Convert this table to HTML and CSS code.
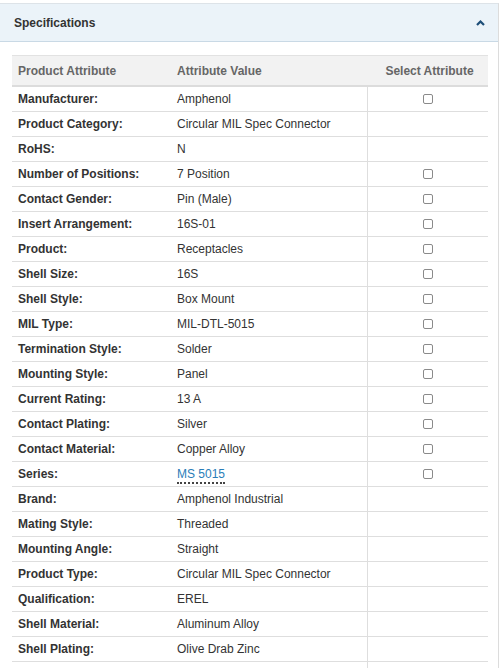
FILE: index.html
```html
<!DOCTYPE html>
<html>
<head>
<meta charset="utf-8">
<link rel="stylesheet" href="styles.css">
</head>
<body>
<div class="panel">
  <div class="panel-head">
    <span class="panel-title">Specifications</span>
    <svg class="chev" width="9" height="6" viewBox="0 0 9 6"><polyline points="1,5 4.5,1.5 8,5" fill="none" stroke="#1d4e78" stroke-width="2.2"/></svg>
  </div>
  <div class="panel-body">
    <table class="spec">
      <thead>
        <tr><th class="c1">Product Attribute</th><th class="c2">Attribute Value</th><th class="c3">Select Attribute</th></tr>
      </thead>
      <tbody>
        <tr><td class="lbl">Manufacturer:</td><td>Amphenol</td><td class="sel"><span class="cb"></span></td></tr>
        <tr><td class="lbl">Product Category:</td><td>Circular MIL Spec Connector</td><td class="sel"></td></tr>
        <tr><td class="lbl">RoHS:</td><td>N</td><td class="sel"></td></tr>
        <tr><td class="lbl">Number of Positions:</td><td>7 Position</td><td class="sel"><span class="cb"></span></td></tr>
        <tr><td class="lbl">Contact Gender:</td><td>Pin (Male)</td><td class="sel"><span class="cb"></span></td></tr>
        <tr><td class="lbl">Insert Arrangement:</td><td>16S-01</td><td class="sel"><span class="cb"></span></td></tr>
        <tr><td class="lbl">Product:</td><td>Receptacles</td><td class="sel"><span class="cb"></span></td></tr>
        <tr><td class="lbl">Shell Size:</td><td>16S</td><td class="sel"><span class="cb"></span></td></tr>
        <tr><td class="lbl">Shell Style:</td><td>Box Mount</td><td class="sel"><span class="cb"></span></td></tr>
        <tr><td class="lbl">MIL Type:</td><td>MIL-DTL-5015</td><td class="sel"><span class="cb"></span></td></tr>
        <tr><td class="lbl">Termination Style:</td><td>Solder</td><td class="sel"><span class="cb"></span></td></tr>
        <tr><td class="lbl">Mounting Style:</td><td>Panel</td><td class="sel"><span class="cb"></span></td></tr>
        <tr><td class="lbl">Current Rating:</td><td>13 A</td><td class="sel"><span class="cb"></span></td></tr>
        <tr><td class="lbl">Contact Plating:</td><td>Silver</td><td class="sel"><span class="cb"></span></td></tr>
        <tr><td class="lbl">Contact Material:</td><td>Copper Alloy</td><td class="sel"><span class="cb"></span></td></tr>
        <tr><td class="lbl">Series:</td><td><a class="lnk" href="#">MS 5015</a></td><td class="sel"><span class="cb"></span></td></tr>
        <tr><td class="lbl">Brand:</td><td>Amphenol Industrial</td><td class="sel"></td></tr>
        <tr><td class="lbl">Mating Style:</td><td>Threaded</td><td class="sel"></td></tr>
        <tr><td class="lbl">Mounting Angle:</td><td>Straight</td><td class="sel"></td></tr>
        <tr><td class="lbl">Product Type:</td><td>Circular MIL Spec Connector</td><td class="sel"></td></tr>
        <tr><td class="lbl">Qualification:</td><td>EREL</td><td class="sel"></td></tr>
        <tr><td class="lbl">Shell Material:</td><td>Aluminum Alloy</td><td class="sel"></td></tr>
        <tr><td class="lbl">Shell Plating:</td><td>Olive Drab Zinc</td><td class="sel"></td></tr>
        <tr><td class="lbl">&nbsp;</td><td>&nbsp;</td><td class="sel"></td></tr>
      </tbody>
    </table>
  </div>
</div>
</body>
</html>
```

FILE: styles.css
```css
html, body {
  margin: 0;
  padding: 0;
  background: #fff;
}
body {
  padding-top: 3px;
  font-family: "Liberation Sans", Arial, sans-serif;
  font-size: 12px;
  color: #333;
}
.panel {
  width: 498px;
  border-top: 1px solid #dde3e8;
  border-right: 1px solid #dcdcdc;
}
.panel-head {
  height: 37px;
  background: #ebf3f9;
  border-bottom: 1px solid #c9d9e5;
  display: flex;
  align-items: center;
  justify-content: space-between;
  padding: 0 13px 0 14px;
}
.panel-title {
  font-weight: bold;
  color: #333;
  font-size: 12px;
}
.chev {
  display: block;
}
.panel-body {
  padding: 13px 10px 0 12px;
}
.spec {
  width: 476px;
  border-collapse: collapse;
  table-layout: fixed;
}
.spec th {
  background: #f2f2f2;
  color: #666;
  font-weight: bold;
  text-align: left;
  padding: 8px 6px 6px 6px;
  line-height: 15px;
  border-top: 1px solid #e2e2e2;
  border-bottom: 2px solid #dcdcdc;
  font-size: 12px;
}
.spec th.c1 { width: 147px; }
.spec th.c2 { width: 184px; }
.spec th.c3 { text-align: center; padding-left: 10px; }
.spec td {
  padding: 5px 6px;
  line-height: 14px;
  border-bottom: 1px solid #dedede;
  white-space: nowrap;
  vertical-align: middle;
}
.spec td.lbl {
  font-weight: bold;
  color: #333;
}
.spec td.sel {
  border-left: 1px solid #dedede;
  text-align: center;
  padding: 0;
}
.cb {
  display: inline-block;
  width: 8px;
  height: 8px;
  border: 1px solid #8a8a8a;
  border-radius: 2px;
  background: #fff;
  vertical-align: middle;
  position: relative;
  top: -1px;
}
.lnk {
  color: #2a7db8;
  text-decoration: none;
  border-bottom: 2px dotted #444;
  padding-bottom: 1px;
}
```
